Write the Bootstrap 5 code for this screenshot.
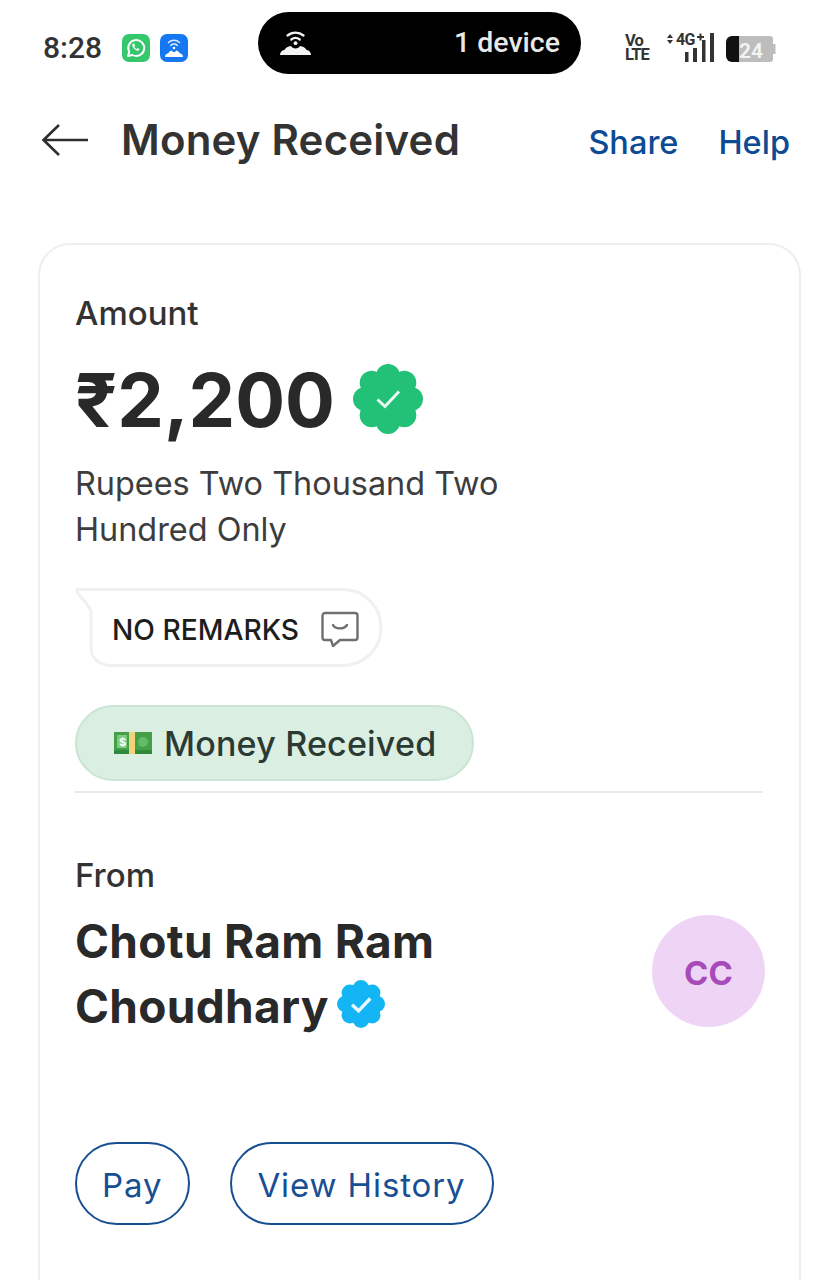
<!DOCTYPE html>
<html lang="en">
<head>
<meta charset="utf-8">
<title>Money Received</title>
<link href="https://cdn.jsdelivr.net/npm/bootstrap@5.3.0/dist/css/bootstrap.min.css" rel="stylesheet">
<style>
html,body{background:#fff;height:1280px;overflow:hidden}
body{font-family:Inter,"Liberation Sans",sans-serif;color:#292929}
.status-row{height:86px;padding:12px 24px 0 43px}
.clock{font:500 30px/1 Roboto,sans-serif;color:#333;width:79px;padding-top:21px;height:62px}
.app-icon{width:28px;height:28px;border-radius:7px;margin-right:10px;margin-top:22px}
.green-app{background:#35c76c}
.blue-app{background:#1577f2}
.island{width:323px;height:62px;background:#000;border-radius:31px;color:#e8e8e8;margin-left:60px;padding:0 21px;font:500 28.500px/1 Roboto,sans-serif}
.net-icons{margin-left:44px;width:154px;height:62px}
.volte{font:700 16.500px/14px Roboto,sans-serif;color:#333;width:40px;text-align:left;padding-top:22px;letter-spacing:-.9px}
.batt{width:51px;height:28px;margin-left:6px;margin-top:23px}
.top-bar{height:108px;padding:0 49px 0 41px}
.page-title{font-size:42px;font-weight:600;letter-spacing:.2px;line-height:1;margin:0 0 0 32px;color:#333}
.head-link{font-size:32.500px;font-weight:500;color:#0d4a94;text-decoration:none;line-height:1}
.head-gap{gap:40px;padding-top:7px}
.sheet{margin:49px 38px 0;height:1100px;border:2px solid #eeeeee;border-bottom:0;border-radius:32px 32px 0 0;padding:52px 35px 0}
.field-label{font-size:33px;font-weight:500;line-height:1;color:#333}
.amount{font-size:74px;font-weight:700;line-height:1;color:#292929;padding-top:2px}
.amount-row{margin-top:26px;gap:18px;height:86px}
.words{font-size:32.400px;line-height:46px;color:#3d3d3d;margin-top:19px;font-weight:400;width:470px}
.remark-tag{width:309px;height:79px;margin-top:35px;position:relative}
.remark-shape{position:absolute;inset:0}
.remark-inner{position:relative;height:100%;padding:5px 0 0 37px;gap:22px;font-size:28.200px;font-weight:500;color:#1d1d1d}
.status-chip{width:399px;height:76px;margin-top:38px;background:#dbeee2;border:2px solid #cbe5d5;border-radius:39px;padding-left:37px;gap:12px;font-size:34px;font-weight:500;color:#2b3a33;letter-spacing:.2px}
.split{border-top:2px solid #e9e9e9;margin:10px 1px 0 0;opacity:1}
.from-block{margin-top:66px}
.person{font-size:46px;font-weight:700;line-height:65px;margin-top:17px;color:#292929;letter-spacing:.3px}
.verified{margin-left:-3px;vertical-align:-5px}
.avatar{width:113px;height:112px;border-radius:50%;background:#efd5f5;color:#a64bb8;font-size:33px;font-weight:700;margin-top:56px;margin-right:-1px;padding-top:5px}
.action-row{margin-top:103px;gap:40px}
.ghost-btn{height:83px;border:2.500px solid #174f92;border-radius:42px;background:#fff;color:#174f92;font-size:33px;font-weight:400;padding:4px 26px 0 25px;letter-spacing:.9px;line-height:1}
.ghost-btn:hover{background:#fff;color:#174f92;border-color:#174f92}
</style>
</head>
<body>
<div class="status-row d-flex align-items-start">
  <div class="clock">8:28</div>
  <div class="app-icon green-app d-flex align-items-center justify-content-center">
    <svg width="22" height="22" viewBox="0 0 22 22" fill="none"><path d="M3 19l1.200-4.200A8 8 0 1 1 7.400 18z" stroke="#fff" stroke-width="1.900" stroke-linejoin="round"/><path d="M8 6.600c-.9.8-1 2 0 3.700 1 1.700 2.300 2.800 4 3.400 1.200.3 2.300-.3 2.600-1.400l-2-1.200-1 .9c-1-.4-1.800-1.300-2.300-2.300l.8-1-1-2.300z" fill="#fff"/></svg>
  </div>
  <div class="app-icon blue-app d-flex align-items-center justify-content-center">
    <svg width="24" height="24" viewBox="0 0 24 24" fill="none"><path d="M6.500 6.500a8 8 0 0 1 11 0M8.800 9.300a4.700 4.700 0 0 1 6.400 0" stroke="#dceaff" stroke-width="1.600" stroke-linecap="round"/><circle cx="12" cy="12" r="1.300" fill="#fff"/><path d="M3 21c0-2 1.300-3.200 3-3.400.8-1.700 2.300-2.900 4-3.100.4 1 1.100 1.500 2 1.500s1.600-.5 2-1.500c1.700.2 3.200 1.400 4 3.100 1.700.2 3 1.400 3 3.400z" fill="#fff"/></svg>
  </div>
  <div class="island d-flex align-items-center justify-content-between">
    <svg width="34" height="26" viewBox="0 0 34 26" fill="none"><path d="M8.500 5.500a12.500 12.500 0 0 1 16 0M12.300 9.500a7 7 0 0 1 8.400 0" stroke="#f3f3f3" stroke-width="2.300" stroke-linecap="round"/><circle cx="16.500" cy="13.200" r="1.900" fill="#f3f3f3"/><path d="M1 25c0-2.800 1.600-4.700 4.300-5.100C6.600 17.900 9 16.400 12 16.100c.6 1.500 2.500 2.400 4.500 2.400s3.900-.9 4.500-2.400c3 .3 5.400 1.800 6.700 3.800 2.700.4 4.300 2.300 4.300 5.100z" fill="#f3f3f3"/></svg>
    <span>1 device</span>
  </div>
  <div class="net-icons d-flex align-items-start">
    <div class="volte">Vo<br>LTE</div>
    <svg width="54" height="62" viewBox="0 0 54 62" class="flex-shrink-0"><g fill="#333"><path d="M2 26l3-4 3 4zM2 28l3 4 3-4z"/><text x="11" y="33" font-family="Roboto,sans-serif" font-weight="700" font-size="16" letter-spacing="-.6">4G</text><path d="M32 24h2.500v-2.500h2v2.500H39v2h-2.500v2.500h-2V26H32z"/><rect x="20" y="40" width="3.500" height="10"/><rect x="28" y="36" width="4" height="14"/><rect x="37" y="28" width="3.500" height="22"/><rect x="45" y="21" width="4" height="29"/></g></svg>
    <svg class="batt flex-shrink-0" viewBox="0 0 51 28"><path d="M6 1h39a3 3 0 0 1 3 3v20a3 3 0 0 1-3 3H6z" fill="#bdbdbd"/><rect x="48" y="9" width="2.500" height="10" fill="#bdbdbd"/><path d="M14 1H7a6 6 0 0 0-6 6v14a6 6 0 0 0 6 6h7z" fill="#111"/><text x="14" y="23" font-family="Roboto,sans-serif" font-weight="600" font-size="21" fill="#f4f4f4">24</text></svg>
  </div>
</div>

<div class="top-bar d-flex align-items-center">
  <svg width="48" height="34" viewBox="0 0 48 34" fill="none" class="flex-shrink-0"><path d="M47 17H3M18 2L2.500 17 18 32" stroke="#2e2e2e" stroke-width="2.600"/></svg>
  <h1 class="page-title">Money Received</h1>
  <div class="ms-auto d-flex head-gap">
    <a href="#" class="head-link">Share</a>
    <a href="#" class="head-link">Help</a>
  </div>
</div>

<div class="sheet">
  <div class="field-label">Amount</div>
  <div class="amount-row d-flex align-items-center">
    <span class="amount">₹2,200</span>
    <svg width="70" height="70" viewBox="0 0 70 70" class="flex-shrink-0">
      <g fill="#22c177"><circle cx="35" cy="35" r="24"/><circle cx="35" cy="12" r="12"/><circle cx="51.300" cy="18.700" r="12"/><circle cx="58" cy="35" r="12"/><circle cx="51.300" cy="51.300" r="12"/><circle cx="35" cy="58" r="12"/><circle cx="18.700" cy="51.300" r="12"/><circle cx="12" cy="35" r="12"/><circle cx="18.700" cy="18.700" r="12"/></g>
      <path d="M24.500 35.500l7.500 7 14-15" fill="none" stroke="#eafaf2" stroke-width="3"/>
    </svg>
  </div>
  <div class="words">Rupees Two Thousand Two Hundred Only</div>

  <div class="remark-tag">
    <svg class="remark-shape" width="309" height="79" viewBox="0 0 309 79" fill="#fff"><path d="M2 1.500H268a38 38 0 0 1 38 38 38 38 0 0 1-38 38H36C24 77.500 16 70 16 60V24C16 18 2 6 2 3.500z" stroke="#f0f0f0" stroke-width="3"/></svg>
    <div class="remark-inner d-flex align-items-center">
      <span>NO REMARKS</span>
      <svg width="38" height="38" viewBox="0 0 38 38" fill="none" class="flex-shrink-0"><path d="M4 2h30a2.500 2.500 0 0 1 2.500 2.500v22A2.500 2.500 0 0 1 34 29H19l-7 6-2-6H4a2.500 2.500 0 0 1-2.500-2.500v-22A2.500 2.500 0 0 1 4 2z" stroke="#6f6f6f" stroke-width="2.400" stroke-linejoin="round"/><path d="M12 14c2 4.500 11 4.500 14 0" stroke="#6f6f6f" stroke-width="2.400" stroke-linecap="round"/></svg>
    </div>
  </div>

  <div class="status-chip d-flex align-items-center">
    <svg width="38" height="24" viewBox="0 0 38 24" class="flex-shrink-0"><rect y="1" width="38" height="22" fill="#43a047"/><rect x="0" y="19" width="38" height="4" fill="#2e8b3d"/><rect x="15" y="1" width="6" height="22" fill="#f3d27a"/><rect x="3" y="4" width="10" height="13" fill="#7ccb7f"/><text x="5" y="15" font-size="11" font-weight="700" fill="#fff" font-family="Inter,sans-serif">$</text><circle cx="29" cy="11" r="5" fill="#66bb6a"/></svg>
    <span>Money Received</span>
  </div>
  <hr class="split">

  <div class="from-block d-flex justify-content-between align-items-start">
    <div>
      <div class="field-label">From</div>
      <div class="person">Chotu Ram Ram<br>Choudhary
        <svg class="verified" width="48" height="48" viewBox="0 0 70 70">
          <g fill="#13b5f5"><circle cx="35" cy="35" r="24"/><circle cx="35" cy="12" r="12"/><circle cx="51.300" cy="18.700" r="12"/><circle cx="58" cy="35" r="12"/><circle cx="51.300" cy="51.300" r="12"/><circle cx="35" cy="58" r="12"/><circle cx="18.700" cy="51.300" r="12"/><circle cx="12" cy="35" r="12"/><circle cx="18.700" cy="18.700" r="12"/></g>
          <path d="M22 36l9.500 9 17-18" fill="none" stroke="#e6f8ff" stroke-width="5"/>
        </svg>
      </div>
    </div>
    <div class="avatar d-flex align-items-center justify-content-center">CC</div>
  </div>

  <div class="action-row d-flex">
    <button type="button" class="btn ghost-btn">Pay</button>
    <button type="button" class="btn ghost-btn">View History</button>
  </div>
</div>
</body>
</html>
